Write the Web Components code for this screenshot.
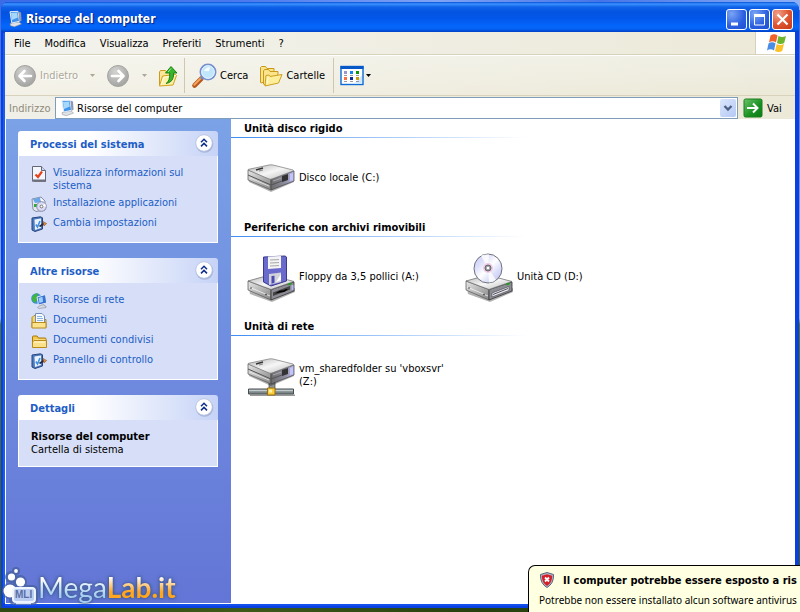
<!DOCTYPE html>
<html lang="it">
<head>
<meta charset="utf-8">
<title>Risorse del computer</title>
<style>
  html { height: 100%; }
  body {
    margin: 0; min-height: 100vh; box-sizing: border-box; position: relative; overflow: hidden;
    display: flex; padding: 2px 1px 4px 1px;
    font: 11px/13px "DejaVu Sans Condensed", "DejaVu Sans", sans-serif; color: #000;
    background:
      linear-gradient(90deg, #2f4a12, #3d5a1a 30%, #27400f 60%, #35521a) bottom / 100% 4px no-repeat,
      linear-gradient(90deg, #3c6be8, #4a79ee 30%, #7fa3f4 55%, #4474e8 75%, #8db0f6) top / 100% 10px no-repeat,
      linear-gradient(#3c6be8, #8fb2f0 52%, #4f7a22 53%, #3a5a18);
  }
  .links { display: flex; flex-direction: column; gap: 4px; }
</style>
</head>
<body>
<xp-window>
  <xp-titlebar slot="title" icon="computer">Risorse del computer</xp-titlebar>
  <xp-menubar slot="bars">
    <xp-menu>File</xp-menu><xp-menu>Modifica</xp-menu><xp-menu>Visualizza</xp-menu><xp-menu>Preferiti</xp-menu><xp-menu>Strumenti</xp-menu><xp-menu>?</xp-menu>
  </xp-menubar>
  <xp-toolbar slot="bars"></xp-toolbar>
  <xp-addressbar slot="bars" value="Risorse del computer"></xp-addressbar>

  <xp-panel slot="side" heading="Processi del sistema">
    <div class="links">
      <xp-task icon="info">Visualizza informazioni sul sistema</xp-task>
      <xp-task icon="install">Installazione applicazioni</xp-task>
      <xp-task icon="settings">Cambia impostazioni</xp-task>
    </div>
  </xp-panel>
  <xp-panel slot="side" heading="Altre risorse">
    <div class="links">
      <xp-task icon="network">Risorse di rete</xp-task>
      <xp-task icon="documents">Documenti</xp-task>
      <xp-task icon="folder">Documenti condivisi</xp-task>
      <xp-task icon="settings">Pannello di controllo</xp-task>
    </div>
  </xp-panel>
  <xp-panel slot="side" heading="Dettagli">
    <b>Risorse del computer</b><br>Cartella di sistema
  </xp-panel>

  <xp-group heading="Unità disco rigido">
    <xp-drive icon="hdd">Disco locale (C:)</xp-drive>
  </xp-group>
  <xp-group heading="Periferiche con archivi rimovibili">
    <xp-drive icon="floppy">Floppy da 3,5 pollici (A:)</xp-drive>
    <xp-drive icon="cd">Unità CD (D:)</xp-drive>
  </xp-group>
  <xp-group heading="Unità di rete">
    <xp-drive icon="netdrive">vm_sharedfolder su 'vboxsvr' (Z:)</xp-drive>
  </xp-group>
</xp-window>
<xp-watermark></xp-watermark>
<xp-balloon heading="Il computer potrebbe essere esposto a ris">Potrebbe non essere installato alcun software antivirus</xp-balloon>

<script>
const METAL = `<defs>
  <linearGradient id="top" x1="0" y1="0" x2="1" y2="1"><stop offset="0" stop-color="#b4b4b4"/><stop offset=".5" stop-color="#f6f6f6"/><stop offset="1" stop-color="#b9b9b9"/></linearGradient>
  <linearGradient id="left" x1="0" y1="0" x2="1" y2="1"><stop offset="0" stop-color="#e6e6e6"/><stop offset="1" stop-color="#858585"/></linearGradient>
  <linearGradient id="right" x1="0" y1="0" x2="1" y2="0"><stop offset="0" stop-color="#6c6c6c"/><stop offset=".6" stop-color="#8c8c9e"/><stop offset="1" stop-color="#b9b9ee"/></linearGradient>
</defs>`;
/* Closed drive body; dy moves it inside the 48px box. */
const disk = dy => `<g transform="translate(0 ${dy})">
  <path d="M2 29 24 39 47 29 46 26 24 34 2 24z" fill="#000" opacity=".3"/>
  <path d="M1 17 24 26v11L1 27z" fill="url(#left)" stroke="#555" stroke-width=".7"/>
  <path d="M24 26 47 18v10L24 37z" fill="url(#right)" stroke="#444" stroke-width=".7"/>
  <path d="M1 17Q1 16 3 16L22 12q2-.5 4 0l20 5q1 .5 0 1L25 26q-1 .4-3 0z" fill="url(#top)" stroke="#777" stroke-width=".7"/>
  <path d="M1 22 24 32 35 28" fill="none" stroke="#555"/><path d="M3 25l19 8" stroke="#eee" stroke-width=".8"/>
  <path d="M35 23l6-2v6l-6 2z" fill="#333"/><path d="M43 21l3-1v7l-3 1z" fill="#c4c4f6"/>
  <path d="M26 28l8-2.800" stroke="#aaa"/><path d="M9 17l7-2" stroke="#333" stroke-width="1.500"/><path d="M12 18l4-1" stroke="#888"/>
</g>`;
/* Drive body shared by the floppy and the CD unit. */
const base = front => `<path d="M3 42 25 50 48 40V36L24 45 2 36z" fill="#000" opacity=".3"/>
  <path d="M1 29 24 37.500V48L1 38z" fill="url(#left)" stroke="#555" stroke-width=".7"/>
  <path d="M24 37.500 47 30v9L24 48z" fill="#8c8c94" stroke="#333" stroke-width=".8"/>
  <path d="M1 29 19 24 Q22 23 26 24L47 29.500 24 37.500z" fill="url(#top)" stroke="#666" stroke-width=".7"/>
  <path d="M2 35l21 9" stroke="#fff" stroke-width=".7"/><circle cx="4" cy="36" r=".8" fill="#333"/><circle cx="19" cy="42.500" r=".8" fill="#333"/>${front}
  <path d="M41.500 31.500l3-1v2l-3 1z" fill="#18a018"/>`;
const PC = `<path d="M3 12.500l9-1.500 2.500 2-7 2.700-4-1z" fill="#dfe2e6" stroke="#888" stroke-width=".5"/>
  <path d="M3 .700 11 .300l1.500 10L4.800 12z" fill="#3f93ea"/><path d="M4 2l6-.4.800 5-5.800 2.400z" fill="#a6d8fc"/>
  <path d="M3 .700 11 .300l1.500 10L4.800 12z" fill="none" stroke="#e3ebf6" stroke-width="1"/>
  <path d="M11.500.500l2.500 1 .500 8-2 1.500z" fill="#8e99b4"/>`;
const FOLDER = `<path d="M1.500 14V4q0-1 1-1H6l1.500 2H14q1 0 1 1v8z" fill="#f3c94d" stroke="#a87808"/>
  <path d="M3.500 6.500h11v7h-12z" fill="#fdeeb0"/><path d="M1.500 14.500V9L3 7.500h12.500v7z" fill="#fbe08a" stroke="#b98a18"/><path d="M3 9h11" stroke="#fffbe0"/>`;
const ARROWC = d => `<defs><radialGradient id="g" cx=".4" cy=".3" r=".8"><stop offset="0" stop-color="#d4d4d2"/><stop offset="1" stop-color="#9c9c9a"/></radialGradient></defs>
  <circle cx="12" cy="12" r="10.500" fill="url(#g)" stroke="#a3a3a0"/><path d="${d}" fill="none" stroke="#fff" stroke-width="2.600" stroke-linecap="round" stroke-linejoin="round"/>`;

const ICONS = {
  computer: [16, PC],
  back: [24, ARROWC('M18 12H7M11.500 7 6.500 12l5 5')],
  forward: [24, ARROWC('M6 12h11M12.500 7l5 5-5 5')],
  up: [24, `<path d="M1.500 21.500V8l1-1.500h5l1.500 2h5v3" fill="#fbe79a" stroke="#c99a1c"/>
    <path d="M1.500 22 4.500 12l13-1.500 1 1L15 21z" fill="#fdf0a8" stroke="#d1a11c"/><path d="M3 21 6 13.200l11-1.300" fill="none" stroke="#fffbe2"/>
    <path d="M8 19.500q4-2 3.700-10.500H7.500L13 2.500l6 6.500h-3.300q.3 9.500-7.700 10.500z" fill="#38b52c" stroke="#14790f" stroke-width=".9"/><path d="M10 8 13 4.500" stroke="#a5eb8e"/>`],
  search: [26, `<path d="M3.500 22.500 10.500 15.500" stroke="#b5561c" stroke-width="4.600" stroke-linecap="round"/><path d="M3.300 21.700 10 15" stroke="#f6a45c" stroke-width="2" stroke-linecap="round"/>
    <path d="M10 16l2.500-2.500" stroke="#7a86a8" stroke-width="3"/>
    <circle cx="17" cy="9" r="7.600" fill="#bfe6fc" stroke="#7a90cc" stroke-width="1.800"/><circle cx="17" cy="9" r="6.300" fill="none" stroke="#e9f7ff" stroke-width="1"/><path d="M13 8q1.500-4 6-3.800l-1 4z" fill="#fff" opacity=".9"/>`],
  folders: [24, `<path d="M1.500 18.500V3.500l1-1h4l1.500 2h7v3L3 19z" fill="#fbe48c" stroke="#c9991a"/><path d="M4.500 20V7l1-1.500h4l1.500 2h8v3L6 21z" fill="#fbe48c" stroke="#c9991a"/>
    <path d="M6 22 7 11.500l3-.5 1 1.500L23 10.500 19.500 19z" fill="#fdee9c" stroke="#cf9e1c"/><path d="M8 20l1.200-7" stroke="#fffbe0"/>`],
  views: [24, `<rect x="1" y="2.500" width="22" height="18" fill="#fff" stroke="#0a6ad6" stroke-width="1.400"/><path d="M.500 2h23v3H.500z" fill="#0858c8"/>
    <path d="M14 20 22 11v9z" fill="#cfe6ff"/>
    <path d="M4 7h3v3H4z" fill="#9a97cf"/><path d="M10 7h3v3h-3z" fill="#1585e8"/><path d="M16 7h3v3h-3z" fill="#0c980c"/>
    <path d="M4 13h3v3H4z" fill="#fb7040"/><path d="M10 13h3v3h-3z" fill="#0a2c98"/><path d="M16 13h3v3h-3z" fill="#cf9c10"/>
    <path d="M4 11.500h3m3 0h3m3 0h3M4 17.500h3m3 0h3m3 0h3" stroke="#9a9a9a"/>`],
  caret: [7, `<path d="M1 2h5L3.500 5z" fill="currentColor"/>`],
  chevron: [16, `<path d="M4.500 6 8 9.500 11.500 6" fill="none" stroke="#4d6185" stroke-width="2.400"/>`],
  go: [20, `<defs><linearGradient id="go" x1="0" y1="0" x2="1" y2="1"><stop offset="0" stop-color="#6cc46a"/><stop offset=".6" stop-color="#189020"/><stop offset="1" stop-color="#0c7a14"/></linearGradient></defs>
    <rect x="1" y="1" width="18" height="18" rx="1.500" fill="url(#go)" stroke="#1b7e1f"/><path d="M4 10h10M10 5.500 14.500 10 10 14.500" fill="none" stroke="#fff" stroke-width="2"/>`],
  flag: [22, `<path d="M5.500 3.500q3.500-2.500 7 0L11 10.500q-3.500-2.500-7 0z" fill="#f0622a"/><path d="M13.500 4q3.500 2.200 7.500 0l-1.800 7q-3.600 2-7.200 0z" fill="#6cb52c"/>
    <path d="M3.500 11.500q3.500-2.500 7 0L9 18.500q-3.500-2.500-7 0z" fill="#4a8de4"/><path d="M11.700 12q3.300 2.200 7.300 0l-1.800 7q-3.600 2.200-7.200 0z" fill="#fcc028"/>`],
  info: [16, `<path d="M3 1h8l4 4v11H3z" fill="#8a8a98"/><path d="M1.500.500h9l4 4v10.500h-13z" fill="#f2f6ff" stroke="#667"/><path d="M10.500.500v4h4" fill="#c9d6f4" stroke="#667"/><path d="M1 13.500h13v2H1z" fill="#6d7080"/>
    <path d="M4.500 8.500 7 11 11 5.500" fill="none" stroke="#e8441c" stroke-width="2.200"/>`],
  install: [16, `<path d="M1 3 10 1l4 4v9l-9 1.500-3-2z" fill="#e3e7ee" stroke="#8790a4"/><path d="M2 3l7-1.500L10 6 4 7z" fill="#6aa6ea"/><path d="M3 8h3v3H3z" fill="#34a834"/>
    <path d="M9 2l4 3-2 2z" fill="#fff"/><circle cx="10.500" cy="10.500" r="4.800" fill="#dcdcf6" stroke="#8589ac"/><path d="M10.500 10.500 14 7.500l1 3z" fill="#fff"/><circle cx="10.500" cy="10.500" r="1.400" fill="#fff" stroke="#777"/>`],
  settings: [16, `<path d="M1 2 9.500.800l2 1V13L4 15.500 1 14z" fill="#4b7cc2" stroke="#27457c"/><path d="M3.500 3.500l6.500-1v9.500L4 14z" fill="#edf3fd"/>
    <path d="M4.800 8.500l1.700 2.500L9 5" fill="none" stroke="#3f90e2" stroke-width="1.600"/><path d="M8.500 10.500l4.500-3" stroke="#222c48" stroke-width="1.800"/><path d="M12 5.500l3.700 2-2.700 2.500z" fill="#e58b3c" stroke="#7c4822" stroke-width=".5"/>`],
  network: [16, `<circle cx="5.500" cy="5.500" r="5.300" fill="#3a8de0"/><path d="M1 4q3-4.500 6-3.500L6 4l1 2-3 4Q.500 8 1 4z" fill="#42b440"/>
    <path d="M6 4 14.500 1.500l1.200 8.500-8.200 2z" fill="#3a72d4" stroke="#e2e8f4" stroke-width="1"/><path d="M7.500 5l4-1.200.5 5L8.500 10z" fill="#9fd0fa"/><path d="M9 12.500l4-1 .5 1.500H15v1.500l-7 1-1.500-1z" fill="#d6d9e0" stroke="#777e90" stroke-width=".5"/>`],
  documents: [16, `<path d="M1 14.500V4.500l2-2h3v4h9v8z" fill="#f6d567" stroke="#b18520"/><path d="M4.500.500h6.500l2.500 2.500v8h-9z" fill="#f5faff" stroke="#7490b8"/><path d="M6 3.500h5M6 5.500h6M6 7.500h6" stroke="#8ab2e6"/>
    <path d="M1 15V9.500h14V15z" fill="#fbe38e" stroke="#b98a1c"/>`],
  folder: [16, FOLDER],
  shield: [16, `<path d="M8 .500 14.500 2.500q.5 9-6.500 13Q1 11.500 1.500 2.500z" fill="#b3bac8" stroke="#59617a"/><path d="M8 2.200 13.200 3.700q0 7-5.200 10.300Q2.800 10.700 2.800 3.700z" fill="#d3202a"/>
    <path d="M6 5.500l4 4m0-4-4 4" stroke="#fff" stroke-width="1.800"/>`],
  hdd: [48, METAL + disk(0)],
  netdrive: [48, METAL + `<path d="M22 30h6v9h-6z" fill="#8e9496" stroke="#444" stroke-width=".7"/>` + disk(-4) +
    `<path d="M3 43.500h45v1.500H3z" fill="#000" opacity=".4"/><path d="M1.500 38h45v5h-45z" fill="#7d8789" stroke="#444c4e"/><path d="M2 39.500h44" stroke="#c2cbcd" stroke-width="1.500"/>
    <path d="M20.500 37h7.500v7h-7.500z" fill="#fccb38" stroke="#9a6c10"/><path d="M22 38.500h3v3h-3z" fill="#fff2a8"/>`],
  floppy: [48, METAL + base(`<path d="M26 40.500 43 34v3.500L26 44z" fill="#444"/><path d="M28 41.500l5-3 3 0 3-1.500 2 .5-4 2.500-4 .500z" fill="#000"/><path d="M45.500 33v5" stroke="#b4b4ee" stroke-width="2"/>`) +
    `<path d="M16.500 5 38 4l1.500 1v24L24 34l-7.500-4z" fill="#6a69cc" stroke="#3a3a92"/><path d="M21 4.500l13-.5v12L21 17z" fill="#f4f4f6"/>
    <path d="M23 8l9-.4m-9 3.400 9-.4m-9 3.400 9-.4" stroke="#a6a6a6"/><path d="M22 22l12-1.500v9.500L22 33z" fill="#d2d2da"/><path d="M24.500 24l3-.3v7l-3 1z" fill="#4a4ab0"/><path d="M29 30l5-8v6z" fill="#fff"/>`],
  cd: [48, METAL + base(`<path d="M27 41 44 34.500v4L27 45z" fill="#e6e6f4" stroke="#444" stroke-width=".6"/><path d="M28 42.500l15-6" stroke="#555"/>`) +
    `<defs><linearGradient id="cd" x1="0" y1="0" x2="1" y2="1"><stop offset="0" stop-color="#c3c6f2"/><stop offset=".3" stop-color="#dfe2fb"/><stop offset=".5" stop-color="#fff"/><stop offset=".7" stop-color="#dcdffa"/><stop offset="1" stop-color="#b9bdf0"/></linearGradient></defs>
    <ellipse cx="23" cy="16.500" rx="14" ry="14.500" fill="url(#cd)" stroke="#70707c"/><path d="M23 16 16 3.500q4-1.500 8-1z" fill="#fff" opacity=".8"/><path d="M23 16 31 28q-4 2.500-7 2.500z" fill="#fff" opacity=".8"/>
    <circle cx="23" cy="16" r="5" fill="#f1cdea"/><circle cx="23" cy="16" r="3" fill="#9a9aa2" stroke="#666"/><circle cx="23" cy="16" r="1.300" fill="#fff"/>`],
  collapse: [20, `<circle cx="10.500" cy="11" r="8.800" fill="#8d9cc4" opacity=".55"/><circle cx="10" cy="10" r="8.300" fill="#fff" stroke="#b4bfdd" stroke-width=".8"/>
    <path d="M7 9.200l3-3 3 3M7 13.400l3-3 3 3" fill="none" stroke="#10308c" stroke-width="1.500"/>`],
  min: [19, `<path d="M4 12.500h7v3H4z" fill="#fff"/>`],
  max: [19, `<path d="M4.500 6v9h10V6z" fill="none" stroke="#fff"/><path d="M4 4h11v3H4z" fill="#fff"/>`],
  close: [19, `<path d="M4.500 4.500l10 10m0-10-10 10" stroke="#fff" stroke-width="2.200"/>`],
  bubbles: [34, `<g fill="#45619e" opacity=".75"><circle cx="14" cy="4" r="4"/><circle cx="9" cy="10" r="6"/><circle cx="18" cy="15" r="7"/><circle cx="8" cy="24" r="8"/><rect x="7" y="18" width="29" height="20" rx="5"/></g>
    <g fill="#fff"><circle cx="14" cy="4" r="1.900"/><circle cx="9.500" cy="10" r="3.600"/><circle cx="18.500" cy="15" r="4.600"/><circle cx="8" cy="24" r="6.500"/></g>
    <rect x="11" y="21" width="22" height="14" rx="3" fill="#bccdf2" stroke="#eef4ff" stroke-width="2"/><path d="M14 36.500h15" stroke="#dbe6fa" stroke-width="1.400"/>`]
};

const define = (name, css, html) => customElements.define(name, class extends HTMLElement {
  connectedCallback() {
    if (this.shadowRoot) return;
    const t = document.createElement('template');
    t.innerHTML = `<style>:host,*{box-sizing:border-box}button{font:inherit;color:inherit;background:none;border:0;padding:0;margin:0}${css}</style>` + html(this);
    this.attachShadow({ mode: 'open' }).append(t.content.cloneNode(true));
  }
});
const icon = name => `<xp-icon name="${name}"></xp-icon>`;

define('xp-icon', `:host{display:block;flex:none}svg{display:block;overflow:visible}`, el => {
  const [box, art] = ICONS[el.getAttribute('name')];
  return `<svg width="${box}" height="${box}" viewBox="0 0 ${box} ${box}" aria-hidden="true">${art}</svg>`;
});

define('xp-window', `
  :host{flex:1;min-width:0;display:flex;flex-direction:column;background:#0a3fe0;border-radius:7px 7px 0 0;overflow:hidden}
  .frame{flex:1;display:flex;flex-direction:column;margin:0 4px 4px 4px;box-shadow:-3px 0 0 -1px #1a5cf0, 0 2px 0 #1250ee;background:#ece9d8}
  .content{flex:1;display:flex;border:solid #fff;border-width:0 0 1px 1px;background:#fff}
  aside{width:225px;flex:none;padding:12px 13px 12px 12px;display:flex;flex-direction:column;gap:15px;background:linear-gradient(#7ba2e7,#6375d6)}
  main{flex:1;min-width:0}`,
  () => `<slot name="title"></slot><div class="frame"><slot name="bars"></slot><div class="content"><aside><slot name="side"></slot></aside><main><slot></slot></main></div></div>`);

define('xp-titlebar', `
  :host{display:flex;align-items:center;height:30px;padding:4px 6px 0 6px;gap:3px;color:#fff;font:bold 12px/16px "DejaVu Sans Condensed",sans-serif;text-shadow:1px 1px 1px #0a1f80;
    background:linear-gradient(#0a50d8 0,#3a92ff 2px,#1062e8 5px,#0353e0 10px,#0256e8 16px,#0466fc 24px,#0562f4 27px,#0040c4 30px)}
  .t{flex:1}.b{display:flex;gap:2px}
  button{width:21px;height:21px;border:1px solid #fff;border-radius:3px;display:grid;place-items:center;background:radial-gradient(circle at 25% 20%,#7ba4f4,#2a5fe0 60%,#1d50d0)}
  button.x{background:radial-gradient(circle at 25% 20%,#f0a088,#dd5230 55%,#c63a14)}`,
  el => `${icon(el.getAttribute('icon'))}<span class="t"><slot></slot></span><div class="b"><button aria-label="Riduci a icona">${icon('min')}</button><button aria-label="Ingrandisci">${icon('max')}</button><button class="x" aria-label="Chiudi">${icon('close')}</button></div>`);

define('xp-menubar', `
  :host{display:flex;height:23px;border-bottom:1px solid #d8d2bd;background:linear-gradient(90deg,#f3f3ee,#ece9d8)}
  nav{flex:1;display:flex;align-items:center;gap:14px;padding-left:9px}
  .flag{width:40px;border-left:1px solid #d8d2bd;background:#fff;display:grid;place-items:center}`,
  () => `<nav><slot></slot></nav><div class="flag">${icon('flag')}</div>`);
define('xp-menu', `:host{display:block}`, () => `<button><slot></slot></button>`);

define('xp-toolbar', `
  :host{display:flex;align-items:center;height:41px;padding:0 8px;border-top:1px solid #fff;border-bottom:1px solid #d8d2bd;background:linear-gradient(90deg,rgba(255,255,255,.4),rgba(255,255,255,0)),linear-gradient(#f0efe4,#ece9d8)}
  button{display:flex;align-items:center;gap:3px}
  .off{color:#aca899;text-shadow:1px 1px #fff}
  .drop{width:28px;justify-content:center}
  i{width:1px;height:35px;background:#cfc8ae;margin:0 6px 0 2px}
  .n{width:9px;justify-content:center}
  .f{margin:0 6px 0 11px}`,
  () => `<button class="off" disabled>${icon('back')}Indietro</button><button class="off drop" disabled aria-label="Cronologia indietro">${icon('caret')}</button>
    <button class="off" disabled aria-label="Avanti">${icon('forward')}</button><button class="off drop" disabled aria-label="Cronologia avanti">${icon('caret')}</button>
    <button aria-label="Livello superiore">${icon('up')}</button><i></i>
    <button>${icon('search')}Cerca</button><button class="f">${icon('folders')}Cartelle</button><i></i>
    <button aria-label="Visualizza">${icon('views')}</button><button class="n" aria-label="Tipo di visualizzazione">${icon('caret')}</button>`);

define('xp-addressbar', `
  :host{display:flex;align-items:stretch;height:23px;padding:1px 0 0 4px;background:linear-gradient(90deg,#f1f0e8,#ece9d8)}
  label{align-self:center;color:#8f8b7c;width:46px;white-space:nowrap}
  .box{flex:1;min-width:0;display:flex;align-items:center;gap:2px;border:1px solid #7f9db9;background:#fff;padding:1px 1px 1px 3px}
  input{flex:1;min-width:0;border:0;outline:0;padding:0;font:inherit;color:#000;background:none}
  .d{width:16px;height:18px;border-radius:2px;background:linear-gradient(135deg,#dce7fd,#b4c8f4);display:grid;place-items:center}
  .go{display:flex;align-items:center;gap:4px;padding-left:5px;width:57px}`,
  el => `<label for="a">Indirizzo</label><div class="box">${icon('computer')}<input id="a" value="${el.getAttribute('value')}"><button class="d" aria-label="Apri elenco">${icon('chevron')}</button></div><button class="go">${icon('go')}Vai</button>`);

define('xp-panel', `
  :host{display:block}
  header{height:25px;display:flex;align-items:center;justify-content:space-between;padding:2px 4px 0 12px;border-radius:3px 3px 0 0;background:linear-gradient(90deg,#fff 35%,#c6d3f7)}
  h2{margin:0;font:inherit;font-weight:bold;color:#215dc6}
  header button{margin-top:-4px}
  .body{background:#d6dff7;border:solid #fff;border-width:0 1px 1px;padding:10px 11px 10px 12px}`,
  el => `<header><h2>${el.getAttribute('heading')}</h2><button aria-label="Comprimi">${icon('collapse')}</button></header><div class="body"><slot></slot></div>`);

define('xp-task', `
  :host{display:block}
  a{display:flex;gap:6px;color:#215dc6;text-decoration:none}`,
  el => `<a href="#">${icon(el.getAttribute('icon'))}<span><slot></slot></span></a>`);

define('xp-group', `
  :host{display:block;margin-bottom:17px}
  h2{margin:0;height:19px;padding:3px 0 0 13px;font:inherit;font-weight:bold;width:295px;max-width:100%;background:linear-gradient(90deg,#3f8cf3,#fff) bottom/100% 1px no-repeat}
  .items{display:flex;flex-wrap:wrap;padding:15px 0 0 16px}`,
  el => `<h2>${el.getAttribute('heading')}</h2><div class="items"><slot></slot></div>`);

define('xp-drive', `
  :host{display:flex;align-items:center;gap:4px;width:218px;min-height:48px}
  span{max-width:150px}`,
  el => `${icon(el.getAttribute('icon'))}<span><slot></slot></span>`);

define('xp-watermark', `
  :host{position:absolute;left:2px;bottom:8px;display:flex;align-items:flex-end}
  .bub{position:relative;padding-bottom:3px}
  .mli{position:absolute;left:13px;bottom:3px;font:bold 10px/12px "Liberation Sans",sans-serif;color:#5a6fa4}
  .logo{display:flex;padding-left:2px;font:28px/34px Lato,sans-serif;filter:drop-shadow(0 0 1px #3f5a94) drop-shadow(0 0 2px #3f5a94)}
  .logo span{background:linear-gradient(#fff 25%,#a4cff0 75%);-webkit-background-clip:text;background-clip:text;color:transparent}
  .logo .o{background-image:linear-gradient(#fff 20%,#ffa51e 65%);font-weight:bold}`,
  () => `<div class="bub">${icon('bubbles')}<span class="mli">MLI</span></div><div class="logo"><span>Mega</span><span class="o">Lab.it</span></div>`);

define('xp-balloon', `
  :host{position:absolute;left:528px;right:-1px;bottom:0;height:47px;overflow:hidden;white-space:nowrap;background:#ffffe1;border:solid #000;border-width:1px 0 0 1px;border-radius:7px 0 0 0;padding:6px 0 0 10px}
  .h{display:flex;align-items:center;gap:8px;font-weight:bold}
  p{margin:6px 0 0;font:10px/13px "Noto Sans",sans-serif}`,
  el => `<div class="h">${icon('shield')}<span>${el.getAttribute('heading')}</span></div><p><slot></slot></p>`);
</script>
</body>
</html>
